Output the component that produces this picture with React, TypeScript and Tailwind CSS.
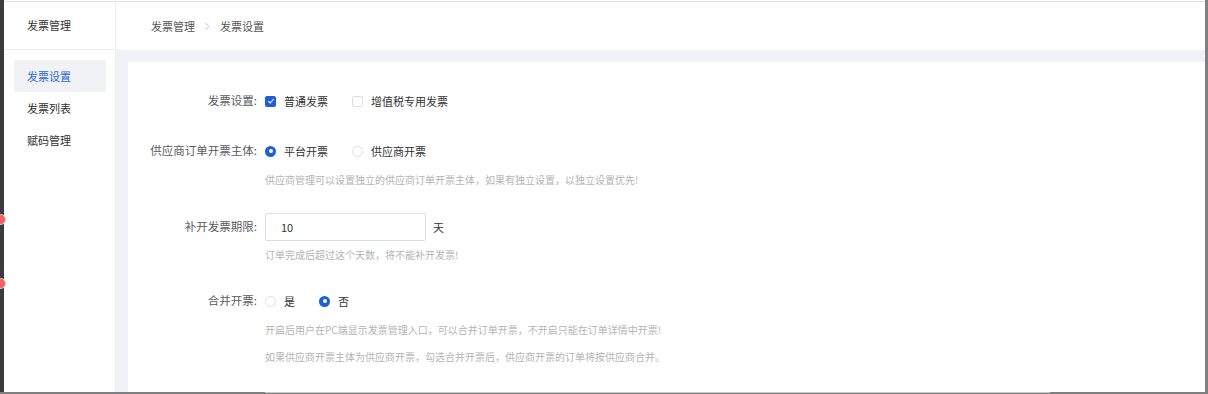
import React from "react";

const FONT = { fontFamily: '"Noto Sans CJK SC", "Noto Sans", sans-serif' };

const menu = [
  { name: "发票设置", active: true },
  { name: "发票列表", active: false },
  { name: "赋码管理", active: false },
];

const Checkbox = ({ checked }: { checked: boolean }) =>
  checked ? (
    <span className="w-[11px] h-[11px] rounded-[2px] bg-[#1d5fd8] flex items-center justify-center">
      <svg width="8" height="8" viewBox="0 0 8 8" fill="none">
        <path d="M1.3 4.2 L3.2 6 L6.8 2" stroke="#fff" strokeWidth="1.1" />
      </svg>
    </span>
  ) : (
    <span className="w-[11px] h-[11px] rounded-[2px] border border-[#dcdfe6] bg-white" />
  );

const Radio = ({ checked }: { checked: boolean }) =>
  checked ? (
    <span className="w-[11px] h-[11px] rounded-full bg-[#1d5fd8] flex items-center justify-center">
      <span className="w-[4px] h-[4px] rounded-full bg-white" />
    </span>
  ) : (
    <span className="w-[11px] h-[11px] rounded-full border border-[#dcdfe6] bg-white" />
  );

const Option = ({
  kind,
  checked,
  label,
}: {
  kind: "checkbox" | "radio";
  checked: boolean;
  label: string;
}) => (
  <label className="flex items-center mr-[24px]">
    {kind === "checkbox" ? <Checkbox checked={checked} /> : <Radio checked={checked} />}
    <span className="ml-[8px] text-[11px] text-[#333]">{label}</span>
  </label>
);

const Label = ({ children }: { children: React.ReactNode }) => (
  <div className="w-[137px] pr-[8px] text-right text-[11.5px] text-[#5a5c61] shrink-0">
    {children}
  </div>
);

const Hint = ({ children, className = "" }: { children: React.ReactNode; className?: string }) => (
  <div className={`pl-[137px] text-[10px] leading-[16px] text-[#b4b4b4] ${className}`}>{children}</div>
);

export default function App() {
  return (
    <div className="w-[1208px] h-[394px] flex flex-col bg-white overflow-hidden relative" style={FONT}>
      <div className="flex flex-1 min-h-0">
        <div className="w-[4px] bg-[#3c3c3c] shrink-0" />
        <div className="flex-1 flex flex-col min-w-0">
          <div className="h-px" />
          <div className="h-px bg-[#e0e0e0]" />
          <div className="flex flex-1 min-h-0">
            {/* sidebar */}
            <div className="w-[112px] border-r border-[#ececec] shrink-0 flex flex-col">
              <div className="h-[48px] border-b border-[#ececec] flex items-center pl-[23px] text-[11px] text-[#333]">
                发票管理
              </div>
              <div className="pt-[10px] pl-[10px]">
                {menu.map((m) => (
                  <div
                    key={m.name}
                    className={`w-[92px] h-[32px] flex items-center pl-[13px] rounded-[2px] text-[11px] ${
                      m.active ? "bg-[#f0f2f5] text-[#2c66d6]" : "text-[#333]"
                    }`}
                  >
                    {m.name}
                  </div>
                ))}
              </div>
            </div>

            {/* main */}
            <div className="flex-1 flex flex-col bg-[#f0f2f5] min-w-0">
              <div className="h-[48px] bg-white flex items-center pl-[35px] text-[11px] text-[#555]">
                <span>发票管理</span>
                <svg className="mx-[9px]" width="7" height="9" viewBox="0 0 7 9" fill="none">
                  <path d="M1.5 1 L5 4.5 L1.5 8" stroke="#c0c4cc" strokeWidth="1" />
                </svg>
                <span>发票设置</span>
              </div>
              <div className="flex-1 pl-[12px] pt-[12px] min-h-0">
                <div className="bg-white h-full pt-[27px]">
                  <div className="flex items-center h-[24px]">
                    <Label>发票设置:</Label>
                    <Option kind="checkbox" checked label="普通发票" />
                    <Option kind="checkbox" checked={false} label="增值税专用发票" />
                  </div>

                  <div className="flex items-center h-[24px] mt-[26px]">
                    <Label>供应商订单开票主体:</Label>
                    <Option kind="radio" checked label="平台开票" />
                    <Option kind="radio" checked={false} label="供应商开票" />
                  </div>
                  <Hint className="mt-[9px]">
                    供应商管理可以设置独立的供应商订单开票主体，如果有独立设置，以独立设置优先!
                  </Hint>

                  <div className="flex items-center h-[28px] mt-[25px]">
                    <Label>补开发票期限:</Label>
                    <div className="w-[161px] h-[28px] border border-[#dcdfe6] rounded-[2px] flex items-center pl-[15px] text-[11px] text-[#333]">
                      10
                    </div>
                    <span className="ml-[7px] text-[11px] text-[#333]">天</span>
                  </div>
                  <Hint className="mt-[6px]">订单完成后超过这个天数，将不能补开发票!</Hint>

                  <div className="flex items-center h-[24px] mt-[26px]">
                    <Label>合并开票:</Label>
                    <Option kind="radio" checked={false} label="是" />
                    <Option kind="radio" checked label="否" />
                  </div>
                  <Hint className="mt-[9px]">
                    开启后用户在PC端显示发票管理入口，可以合并订单开票，不开启只能在订单详情中开票!
                  </Hint>
                  <Hint className="mt-[11px]">
                    如果供应商开票主体为供应商开票，勾选合并开票后，供应商开票的订单将按供应商合并。
                  </Hint>
                </div>
              </div>
            </div>
          </div>
        </div>
        <div className="w-[3px] bg-[#808080] shrink-0" />
      </div>
      <div className="h-[2px] bg-[#7f7f7f] shrink-0">
        <div className="ml-[265px] w-[785px] h-px bg-[#c8c8d0]" />
      </div>

      {/* edge badges */}
      <span className="absolute left-[-5px] top-[214px] w-[11px] h-[11px] rounded-full bg-[#f06262] border border-[#f8c8c8]" />
      <span className="absolute left-[-5px] top-[278px] w-[11px] h-[11px] rounded-full bg-[#f06262] border border-[#f8c8c8]" />
    </div>
  );
}
